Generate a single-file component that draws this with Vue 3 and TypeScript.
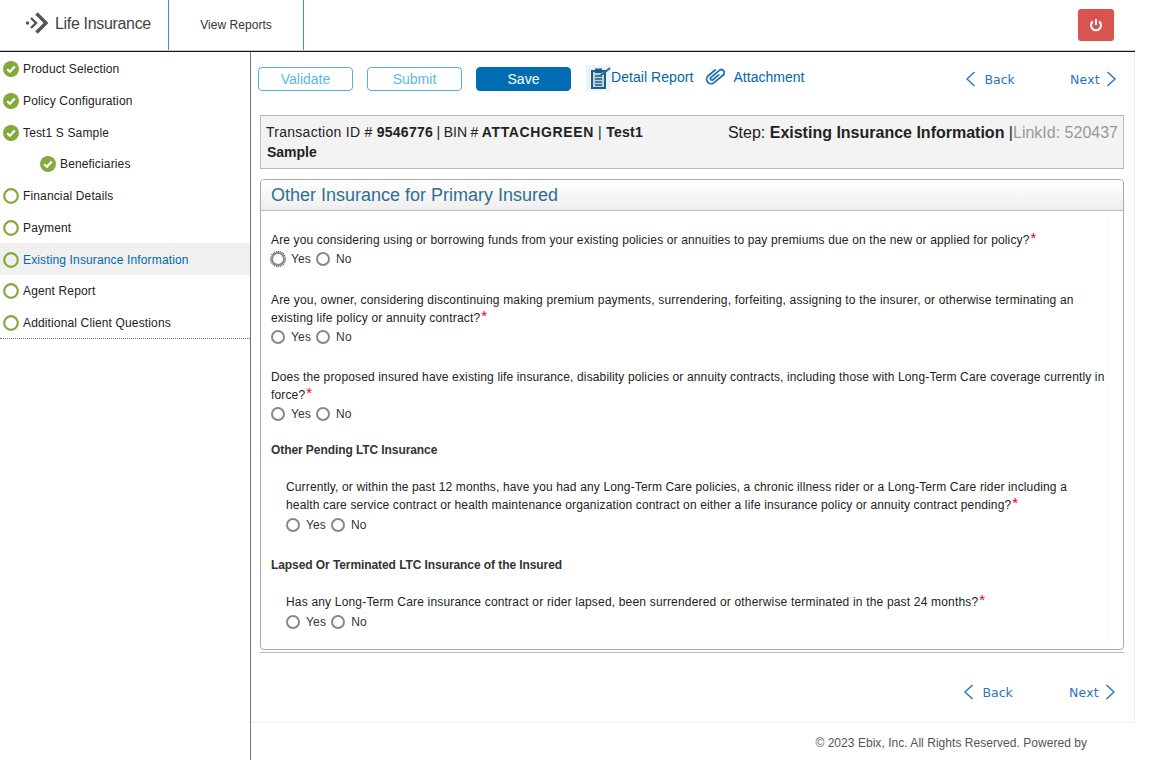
<script setup lang="ts">
interface Step { label: string; done: boolean; sub?: boolean; active?: boolean }
const steps: Step[] = [
  { label: 'Product Selection', done: true },
  { label: 'Policy Configuration', done: true },
  { label: 'Test1 S Sample', done: true },
  { label: 'Beneficiaries', done: true, sub: true },
  { label: 'Financial Details', done: false },
  { label: 'Payment', done: false },
  { label: 'Existing Insurance Information', done: false, active: true },
  { label: 'Agent Report', done: false },
  { label: 'Additional Client Questions', done: false },
]
</script>

<template>
  <div class="page">
    <header class="top">
      <div class="brand">
        <svg class="logo" width="24" height="24" viewBox="0 0 24 24">
          <circle cx="2.500" cy="11" r="1.700" fill="#555" />
          <path d="M6 6 11 11 6 16" fill="none" stroke="#555" stroke-width="2.400" />
          <path d="M11.500 1.500 21 11 11.500 20.500" fill="none" stroke="#555" stroke-width="3.400" />
        </svg>
        <span class="brand-name">Life Insurance</span>
      </div>
      <div class="tab">View Reports</div>
      <div class="top-spacer"></div>
      <button class="power" aria-label="Log out">
        <svg width="14" height="14" viewBox="0 0 14 14">
          <path d="M3.900 3.400a5 5 0 1 0 6.200 0" fill="none" stroke="#fff" stroke-width="2" />
          <path d="M7 1v6" fill="none" stroke="#fff" stroke-width="2" />
        </svg>
      </button>
    </header>

    <div class="body">
      <aside class="side">
        <ul class="steps">
          <li v-for="s in steps" :key="s.label" class="step" :class="{ sub: s.sub, active: s.active }">
            <svg v-if="s.done" class="ico" width="16" height="16" viewBox="0 0 16 16">
              <circle cx="8" cy="8" r="8" fill="#84a93f" />
              <path d="M4.200 8.200 7 10.800 11.800 5.600" fill="none" stroke="#fff" stroke-width="2.200" />
            </svg>
            <svg v-else class="ico" width="16" height="16" viewBox="0 0 16 16">
              <circle cx="8" cy="8" r="6.800" fill="none" stroke="#84a93f" stroke-width="2.200" />
            </svg>
            <span>{{ s.label }}</span>
          </li>
        </ul>
      </aside>

      <main class="main">
        <div class="content">
          <div class="toolbar">
            <button class="btn ghost validate">Validate</button>
            <button class="btn ghost submit">Submit</button>
            <button class="btn solid">Save</button>
            <a class="tool report">
              <svg width="25" height="26" viewBox="0 0 25 26">
                <rect width="25" height="26" fill="#eef3f5" />
                <path d="M6 6h13v17H6z" fill="#bcd3df" stroke="#1c5f83" stroke-width="2" />
                <path d="M9 3.500h7V8H9z" fill="#1c5f83" />
                <path d="M9 11h7M9 14h7M9 17h7M9 20h7" stroke="#1c5f83" stroke-width="1.500" />
                <path d="M14 11 24 3" stroke="#1c6f9c" stroke-width="2" />
              </svg>
              <span>Detail Report</span>
            </a>
            <a class="tool attach">
              <svg width="20" height="20" viewBox="0 0 20 20">
                <g transform="rotate(50 10 10)">
                  <path d="M5.500 6.500v9a4.500 4.500 0 0 0 9 0V3.500a3 3 0 0 0-6 0v11a1.500 1.500 0 0 0 3 0V7" transform="translate(0 -.5)" fill="none" stroke="#1f6fbf" stroke-width="1.800" stroke-linecap="round" />
                </g>
              </svg>
              <span>Attachment</span>
            </a>
            <div class="pager top-pager">
              <a class="pg back"><svg width="11" height="16" viewBox="0 0 11 16"><path d="M9.500 1 2 8l7.500 7" fill="none" stroke="#2a73bd" stroke-width="1.400" /></svg><span>Back</span></a>
              <a class="pg next"><span>Next</span><svg width="11" height="16" viewBox="0 0 11 16"><path d="M1.500 1 9 8l-7.500 7" fill="none" stroke="#2a73bd" stroke-width="1.400" /></svg></a>
            </div>
          </div>

          <div class="info">
            <div class="info-left">Transaction ID # <b>9546776</b><span class="bin"> | BIN # </span><b class="code">ATTACHGREEN</b><span class="sep"> | </span><b>Test1<br /><span class="indent">Sample</span></b></div>
            <div class="info-right">Step: <b>Existing Insurance Information</b> |<span class="link">LinkId: 520437</span></div>
          </div>

          <section class="panel">
            <h2 class="panel-head">Other Insurance for Primary Insured</h2>
            <div class="panel-body">
              <div class="q q1">
                <p>Are you considering using or borrowing funds from your existing policies or annuities to pay premiums due on the new or applied for policy?<i>*</i></p>
                <div class="yn"><span class="radio focus"></span><span>Yes</span><span class="radio"></span><span>No</span></div>
              </div>
              <div class="q q2">
                <p>Are you, owner, considering discontinuing making premium payments, surrendering, forfeiting, assigning to the insurer, or otherwise terminating an existing life policy or annuity contract?<i>*</i></p>
                <div class="yn"><span class="radio"></span><span>Yes</span><span class="radio"></span><span>No</span></div>
              </div>
              <div class="q q3">
                <p>Does the proposed insured have existing life insurance, disability policies or annuity contracts, including those with Long-Term Care coverage currently in force?<i>*</i></p>
                <div class="yn"><span class="radio"></span><span>Yes</span><span class="radio"></span><span>No</span></div>
              </div>
              <h3 class="group g1">Other Pending LTC Insurance</h3>
              <div class="q nested n1">
                <p>Currently, or within the past 12 months, have you had any Long-Term Care policies, a chronic illness rider or a Long-Term Care rider including a health care service contract or health maintenance organization contract on either a life insurance policy or annuity contract pending?<i>*</i></p>
                <div class="yn"><span class="radio"></span><span>Yes</span><span class="radio"></span><span>No</span></div>
              </div>
              <h3 class="group g2">Lapsed Or Terminated LTC Insurance of the Insured</h3>
              <div class="q nested n2">
                <p>Has any Long-Term Care insurance contract or rider lapsed, been surrendered or otherwise terminated in the past 24 months?<i>*</i></p>
                <div class="yn"><span class="radio"></span><span>Yes</span><span class="radio"></span><span>No</span></div>
              </div>
            </div>
          </section>
          <div class="rule"></div>

          <div class="pager bottom-pager">
            <a class="pg back"><svg width="11" height="16" viewBox="0 0 11 16"><path d="M9.500 1 2 8l7.500 7" fill="none" stroke="#2a73bd" stroke-width="1.400" /></svg><span>Back</span></a>
            <a class="pg next"><span>Next</span><svg width="11" height="16" viewBox="0 0 11 16"><path d="M1.500 1 9 8l-7.500 7" fill="none" stroke="#2a73bd" stroke-width="1.400" /></svg></a>
          </div>
        </div>
        <footer class="foot">© 2023 Ebix, Inc. All Rights Reserved. Powered by</footer>
      </main>
    </div>
  </div>
</template>

<style>
html, body { margin: 0; background: #fff; overflow: hidden; }
</style>

<style scoped>
.page { width: 1152px; height: 760px; font-family: "Liberation Sans", Arial, sans-serif; color: #222; display: flex; flex-direction: column; overflow: hidden; }
.top { width: 1135px; height: 51px; border-bottom: 1px solid #111; box-shadow: inset 0 -1px 0 #ccc; display: flex; align-items: flex-start; flex: none; }
.brand { width: 168px; height: 50px; display: flex; align-items: center; padding-left: 25px; box-sizing: border-box; }
.logo { margin-right: 6px; margin-top: -3px; }
.brand-name { font-size: 16px; color: #444; letter-spacing: -0.33px; margin-top: -3px; }
.tab { width: 134px; height: 50px; border-left: 1px solid #2a9ad6; border-right: 1px solid #2a9ad6; display: flex; align-items: center; justify-content: center; font-size: 12px; color: #333; letter-spacing: .05px; }
.top-spacer { flex: 1; }
.power { width: 36px; height: 32px; margin: 9px 21px 0 0; border: 0; padding: 0; background: #d9534f; border-radius: 3px; display: flex; align-items: center; justify-content: center; }
.body { flex: 1; display: flex; min-height: 0; }
.side { width: 250px; border-right: 1px solid #777; flex: none; letter-spacing: 0.14px; }
.steps { list-style: none; margin: 0; padding: 1.200px 0 0; height: 287px; box-sizing: border-box; border-bottom: 1px dotted #777; }
.step { height: 31.750px; display: flex; align-items: center; gap: 4px; padding-left: 3px; font-size: 12px; color: #222; }
.step.sub { padding-left: 40px; }
.step.active { background: #f0f0f0; box-shadow: 0 -1px 0 #f0f0f0; color: #0069aa; }
.ico { flex: none; }
.main { width: 884px; flex: none; display: flex; flex-direction: column; }
.content { flex: 1; border-right: 1px solid #eee; border-bottom: 1px solid #eee; padding: 0 10px 0 9px; }
.toolbar { height: 63px; display: flex; align-items: flex-start; box-sizing: border-box; padding-top: 15px; margin-left: -2px; }
.btn { height: 24px; width: 95px; box-sizing: border-box; border-radius: 4px; font: 14px "Liberation Sans", Arial, sans-serif; padding: 0; }
.ghost { background: #fff; border: 1px solid #55b0de; color: #5bb7e5; }
.submit { margin-left: 14px; }
.solid { background: #006db3; border: 1px solid #006db3; color: #fff; margin-left: 14px; }
.tool { display: flex; align-items: center; color: #0069aa; font-size: 14px; }
.report { margin-left: 15px; margin-top: -2px; }
.report span { margin-top: -2px; letter-spacing: .06px; }
.attach { margin-left: 12px; gap: 8px; margin-top: 0; }
.attach span { margin-top: 1px; letter-spacing: .02px; }
.attach svg { margin-top: -1px; }
.pager { display: flex; font-family: "DejaVu Sans", Verdana, sans-serif; font-size: 12.500px; color: #2a73bd; }
.pg { display: flex; align-items: center; }
.back { gap: 9px; }
.next { gap: 6px; letter-spacing: .25px; }
.top-pager { margin-left: auto; margin-right: 7px; margin-top: 4px; }
.top-pager .next { margin-left: 55px; }
.info { height: 54px; box-sizing: border-box; border: 1px solid #bbb; background: #f3f3f3; display: flex; justify-content: space-between; padding: 6px 5px 0; font-size: 14px; line-height: 20px; }
.info-left { width: 420px; letter-spacing: .27px; }
.bin { letter-spacing: 0; word-spacing: -.4px; }
.code { letter-spacing: .62px; }
.sep { letter-spacing: .3px; }
.indent { margin-left: 1px; letter-spacing: 0; }
.info-right { font-size: 16px; margin-top: 1px; }
.info-right b { font-size: 16px; }
.link { color: #999; }
.panel { margin-top: 10px; border: 1px solid #aaa; border-radius: 4px; height: 471px; box-sizing: border-box; }
.panel-head { margin: 0; height: 31px; box-sizing: border-box; border-bottom: 1px solid #bbb; background: linear-gradient(#fff, #eee); border-radius: 4px 4px 0 0; padding: 4px 10px 0; font-size: 18px; line-height: 22px; font-weight: 400; color: #2f6f91; }
.panel-body { padding: 21px 0 0 10px; margin-right: 15px; height: 434px; box-sizing: border-box; border-right: 1px solid #f8f8f8; border-bottom: 1px solid #f8f8f8; border-radius: 0 0 5px 0; letter-spacing: 0.14px; }
.q p { margin: 0; font-size: 12px; line-height: 17.750px; color: #222; }
.q i { color: #e00; font-style: normal; font-size: 15px; line-height: 0; margin-left: 1px; vertical-align: 1px; }
.yn { display: flex; align-items: center; height: 18px; font-size: 12px; color: #333; }
.radio { width: 14px; height: 14px; box-sizing: border-box; border: 2px solid #888; border-radius: 50%; margin-right: 6px; }
.radio.focus { outline: 1px dotted #222; outline-offset: 0; }
.yn span:nth-child(2) { margin-right: 5px; }
.q2 { margin-top: 24px; letter-spacing: 0.175px; }
.q2 .yn { margin-top: 1px; }
.q3 { margin-top: 23px; }
.nested { padding-left: 15px; padding-right: 15px; }
.group { margin: 0; font-size: 12px; line-height: 16px; font-weight: 700; color: #333; letter-spacing: -.08px; }
.g1 { margin-top: 19px; }
.n1 { margin-top: 21px; }
.n1 .yn { margin-top: 2px; }
.g2 { margin-top: 23px; }
.n2 { margin-top: 21px; letter-spacing: 0.18px; }
.n2 .yn { margin-top: 1px; }
.rule { height: 0; margin-top: 2px; border-top: 1px solid #bbb; }
.bottom-pager { justify-content: flex-end; margin-top: 31px; margin-right: 8px; }
.bottom-pager .next { margin-left: 56px; }
.foot { height: 37px; flex: none; padding: 13px 48px 0 0; box-sizing: border-box; text-align: right; font-size: 12px; color: #555; letter-spacing: .04px; }
</style>
